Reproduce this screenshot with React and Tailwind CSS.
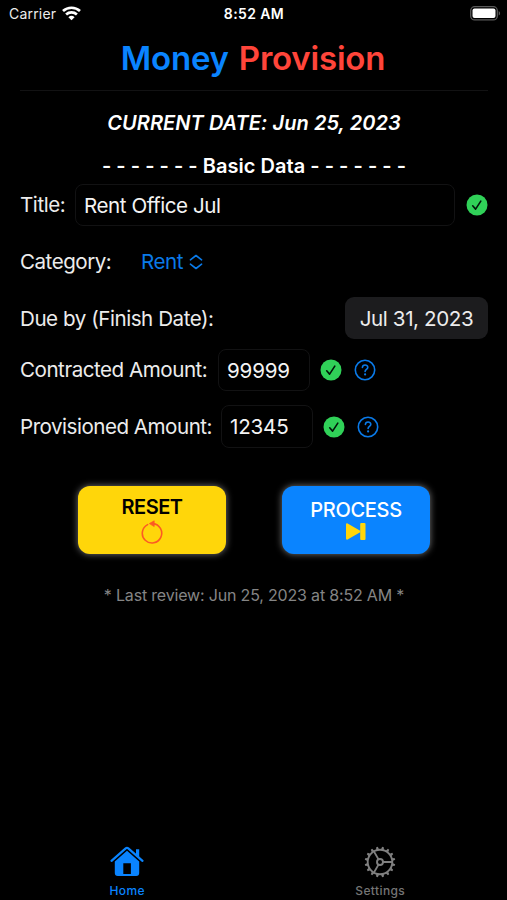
import React, { useState } from "react";

function WifiIcon() {
  return (
    <svg className="h-[15px] w-[19px]" viewBox="0 0 19 15" fill="none" stroke="white" strokeWidth="2.7">
      <path d="M1 5.1a12.4 12.4 0 0 1 17 0" />
      <path d="M4.1 8.5a7.9 7.9 0 0 1 10.8 0" />
      <path d="M9.5 14.2 6.4 11.2a4.6 4.6 0 0 1 6.2 0Z" fill="white" stroke="none" />
    </svg>
  );
}

function BatteryIcon() {
  return (
    <svg className="h-[15px] w-[31px]" viewBox="0 0 31 15">
      <rect x="0.7" y="0.7" width="26.6" height="13.2" rx="4" fill="none" stroke="#5a5a5a" strokeWidth="1.3" />
      <rect x="2.5" y="2.5" width="23" height="9.6" rx="2" fill="white" />
      <path d="M28.7 5v4.6c1.9-.8 1.9-3.8 0-4.6Z" fill="#5a5a5a" />
    </svg>
  );
}

function CheckIcon() {
  return (
    <svg className="h-[22px] w-[22px] shrink-0" viewBox="0 0 22 22">
      <circle cx="11" cy="11" r="10.5" fill="#30d158" />
      <path d="m6.7 11.8 2.9 3.3 5.2-8" fill="none" stroke="#02150a" strokeWidth="1.6" strokeLinecap="round" strokeLinejoin="round" />
    </svg>
  );
}

function HelpIcon() {
  return (
    <svg className="h-[22px] w-[22px] shrink-0" viewBox="0 0 22 22" fill="none" stroke="#0a7ae8" strokeWidth="1.6" strokeLinecap="round">
      <circle cx="11" cy="11" r="9.7" />
      <path d="M8.4 8.5c.1-3.4 5.4-3.3 5.4-.2 0 2.1-2.7 2-2.7 4.2" />
      <circle cx="11.1" cy="15.4" r="1.1" fill="#0a7ae8" stroke="none" />
    </svg>
  );
}

function ChevronsIcon() {
  return (
    <svg className="h-[16px] w-[14px]" viewBox="0 0 14 16" fill="none" stroke="#0a7ae8" strokeWidth="1.6" strokeLinecap="round" strokeLinejoin="round">
      <path d="M1.4 5.8 7 1.5 12.6 5.8M1.4 10.2 7 14.5 12.6 10.2" />
    </svg>
  );
}

function ResetIcon() {
  return (
    <svg className="h-[24px] w-[22px]" viewBox="0 0 22 24">
      <path d="M6.6 4.6A9.7 9.7 0 1 0 12 3.6" fill="none" stroke="#fc5a24" strokeWidth="1.6" strokeLinecap="round" />
      <path d="M8.3 3.6 13.2.8v5.8Z" fill="#fc5a24" stroke="#fc5a24" strokeWidth=".7" strokeLinejoin="round" />
    </svg>
  );
}

function ProcessIcon() {
  return (
    <svg className="h-[17px] w-[20px]" viewBox="0 0 20 17" fill="#ffd60a">
      <path d="M0 1.4C0 .3.8 0 1.6.5L14.2 7.8v1.4L1.6 16.5C.8 17 0 16.7 0 15.6Z" />
      <rect x="14.2" y="0" width="5.3" height="17" rx="1" />
    </svg>
  );
}

function HomeIcon() {
  return (
    <svg className="h-[31px] w-[34px]" viewBox="0 0 34 31">
      <path d="M1.5 14.8 15.7 2.4c.8-.7 1.8-.7 2.6 0l14.2 12.4" fill="none" stroke="#0a84ff" strokeWidth="2.2" strokeLinecap="round" />
      <path d="M26 3.2h3.2v8.4L26 8.6Z" fill="#0a84ff" />
      <path fillRule="evenodd" d="M17 4.8 29.2 15.6V27a3 3 0 0 1-3 3H7.8a3 3 0 0 1-3-3V15.6ZM13.3 17.2V28h7.6V17.2Z" fill="#0a84ff" />
    </svg>
  );
}

function GearIcon() {
  const teeth = Array.from({ length: 16 }, (_, i) => i * 22.5);
  return (
    <svg className="h-[32px] w-[32px]" viewBox="0 0 32 32" fill="none" stroke="#808080" strokeWidth="1.9">
      <circle cx="16" cy="16" r="12.3" />
      <circle cx="16" cy="16" r="3" />
      {teeth.map((angle) => (
        <path key={angle} d="M14.5 3.4 15.2.7h1.6l.7 2.7Z" fill="#808080" stroke="none" transform={`rotate(${angle + 11.25} 16 16)`} />
      ))}
      <path d="M19 16h9M14.5 13.4 9.9 5.4M14.5 18.6l-4.6 8" />
    </svg>
  );
}

function Field({ value, onChange, className }) {
  return (
    <input
      value={value}
      onChange={(e) => onChange(e.target.value)}
      className={`rounded-[8px] border border-[#121213] bg-black pl-2 text-[20.6px] text-[#f4f4f4] outline-none ${className}`}
    />
  );
}

function App() {
  const [title, setTitle] = useState("Rent Office Jul");
  const [contracted, setContracted] = useState("99999");
  const [provisioned, setProvisioned] = useState("12345");

  return (
    <div className="flex h-[900px] w-[507px] flex-col overflow-hidden bg-black font-['Inter',sans-serif] text-[20.6px] text-[#ececec]">
      <header className="grid h-[27px] shrink-0 grid-cols-3 items-center pr-[6px] pl-[9px] text-[14px]">
        <div className="flex items-center gap-[6px]">
          <span className="tracking-[0.2px]">Carrier</span>
          <WifiIcon />
        </div>
        <span className="pr-[2px] text-center font-semibold tracking-[0.4px] text-white">8:52 AM</span>
        <div className="flex justify-end">
          <BatteryIcon />
        </div>
      </header>

      <main className="flex flex-1 flex-col pr-[19px] pl-5">
        <h1 className="flex h-[64px] items-center justify-center gap-[10px] border-b border-[#121213] pr-[2px] text-[33px] font-semibold tracking-[-0.2px]">
          <span className="text-[#0a84ff]">Money</span>
          <span className="text-[#ff453a]">Provision</span>
        </h1>
        <p className="flex h-[63px] items-center justify-center text-[20px] font-semibold tracking-[0.06px] text-white italic">CURRENT DATE: Jun 25, 2023</p>
        <h2 className="flex h-[30px] items-start justify-center pt-px text-[20px] leading-[23px] font-semibold tracking-[0.03px] text-white">- - - - - - - Basic Data - - - - - - -</h2>

        <div className="flex h-[42px] items-center">
          <label className="w-[55px] tracking-[-0.45px]">Title:</label>
          <Field value={title} onChange={setTitle} className="h-[42px] w-[380px] tracking-[-0.45px]" />
          <span className="ml-[10.5px]"><CheckIcon /></span>
        </div>
        <div className="flex h-[71px] items-center">
          <label className="w-[121px] pt-px tracking-[-0.5px]">Category:</label>
          <button className="flex items-center gap-[6px] pt-px tracking-[-0.45px] text-[#0a7ae8]">
            Rent <ChevronsIcon />
          </button>
        </div>
        <div className="flex h-[42px] items-center justify-between">
          <label className="pt-[2px] tracking-[-0.46px]">Due by (Finish Date):</label>
          <button className="h-[42px] w-[143px] rounded-[9px] bg-[#1c1c1e] pt-[2px] text-center tracking-[-0.4px]">Jul 31, 2023</button>
        </div>
        <div className="mt-[10px] flex h-[42px] items-center">
          <label className="w-[198px] pt-px tracking-[-0.48px] whitespace-nowrap">Contracted Amount:</label>
          <Field value={contracted} onChange={setContracted} className="h-[42px] w-[92px] tracking-[-0.2px]" />
          <div className="ml-[10px] flex gap-[12px]"><CheckIcon /><HelpIcon /></div>
        </div>
        <div className="mt-[14px] flex h-[43px] items-center">
          <label className="w-[201px] pt-px tracking-[-0.5px] whitespace-nowrap">Provisioned Amount:</label>
          <Field value={provisioned} onChange={setProvisioned} className="h-[43px] w-[92px] tracking-[-0.2px]" />
          <div className="ml-[10px] flex gap-[12px]"><CheckIcon /><HelpIcon /></div>
        </div>

        <div className="mt-[38px] flex justify-center gap-[56px]">
          <button className="flex h-[68px] w-[148px] flex-col items-center rounded-[12px] bg-[#ffd60a] pt-[9px] text-[20px] leading-[25px] font-semibold tracking-[-0.5px] text-black shadow-[0_0_7px_#777]">
            RESET
            <ResetIcon />
          </button>
          <button className="flex h-[68px] w-[148px] flex-col items-center rounded-[12px] bg-[#0a84ff] pt-[12px] text-[20px] leading-[25px] font-medium tracking-[-0.3px] text-white shadow-[0_0_7px_#777]">
            PROCESS
            <ProcessIcon />
          </button>
        </div>
        <p className="mt-[31px] text-center text-[16px] leading-[20px] tracking-[-0.18px] text-[#858585]">* Last review: Jun 25, 2023 at 8:52 AM *</p>
      </main>

      <nav className="grid h-[54px] grid-cols-2 text-[12px] leading-[15px] font-medium">
        <button className="flex flex-col items-center text-[#0a84ff]">
          <HomeIcon />
          <span className="mt-[6px] pl-px tracking-[0.4px]">Home</span>
        </button>
        <button className="flex flex-col items-center text-[#757575]">
          <GearIcon />
          <span className="mt-[5px] tracking-[0.4px]">Settings</span>
        </button>
      </nav>
    </div>
  );
}

export default App;
